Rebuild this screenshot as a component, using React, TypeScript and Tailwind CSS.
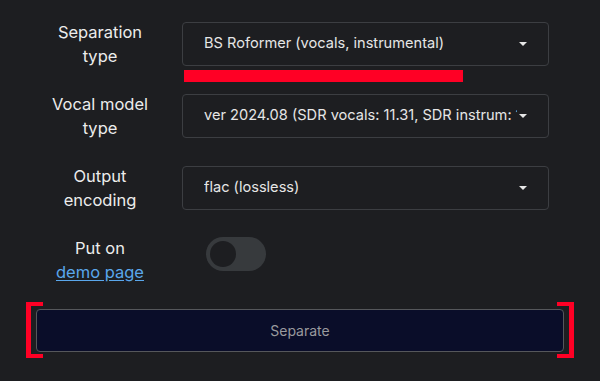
const rows = [
  { label: ["Separation", "type"], value: "BS Roformer (vocals, instrumental)", mark: true },
  { label: ["Vocal model", "type"], value: "ver 2024.08 (SDR vocals: 11.31, SDR instrum: 17.62)" },
  { label: ["Output", "encoding"], value: "flac (lossless)" },
];

function Select({ value, mark }: { value: string; mark?: boolean }) {
  return (
    <div className="relative w-[367px]">
      <div className="flex h-[44px] items-center rounded-[4px] border border-[#3c3e42] pl-[21px] pr-[21px]">
        <span className="flex-1 overflow-hidden whitespace-nowrap text-[14.6px] text-[#e6e6e6]">{value}</span>
        <svg width="8" height="4" viewBox="0 0 8 4" className="ml-[2px] shrink-0" aria-hidden>
          <path d="M0 0h8L4 4z" fill="#e6e6e6" />
        </svg>
      </div>
      {mark && <div className="absolute left-[2px] top-[48px] h-[12px] w-[279px] bg-[#ff0025]" />}
    </div>
  );
}

export default function App() {
  return (
    <div
      className="h-[381px] w-[600px] overflow-hidden bg-[#1d1e21] pt-[20px]"
      style={{ fontFamily: "Inter, 'Noto Sans', sans-serif" }}
    >
      <div className="flex flex-col gap-[24px]">
        {rows.map((r) => (
          <div key={r.value} className="flex h-[48px] items-center">
            <div className="w-[200px] text-center text-[16.5px] leading-[24px] text-[#ececec]">
              <div>{r.label[0]}</div>
              <div>{r.label[1]}</div>
            </div>
            <div className="-ml-[18px]">
              <Select value={r.value} mark={r.mark} />
            </div>
          </div>
        ))}
        <div className="flex h-[48px] items-center">
          <div className="w-[200px] text-center text-[16.5px] leading-[24px] text-[#ececec]">
            <div>Put on</div>
            <a href="#" className="text-[#5aa7ec] underline underline-offset-2">demo page</a>
          </div>
          <div className="mb-[12px] ml-[6px] flex h-[34px] w-[60px] items-center rounded-full bg-[#373a3d] pl-[4px]">
            <div className="h-[26px] w-[26px] rounded-full bg-[#1d1e21]" />
          </div>
        </div>
      </div>
      <div className="mt-[18px] flex items-center px-[26px]">
        <div className="h-[56px] w-[17px] border-y-[4px] border-l-[5px] border-[#ff0025]" />
        <button className="-mx-[7px] h-[43px] flex-1 rounded-[4px] border border-[#55575b] bg-[#0a0d29] text-[14px] text-[#9a9a9e]">
          Separate
        </button>
        <div className="h-[56px] w-[17px] border-y-[4px] border-r-[5px] border-[#ff0025]" />
      </div>
    </div>
  );
}
